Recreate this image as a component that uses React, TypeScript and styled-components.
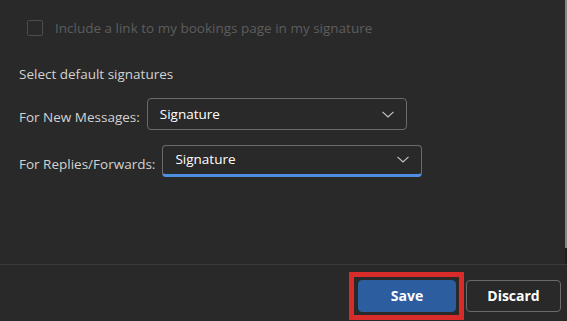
import styled, { createGlobalStyle } from 'styled-components';

const GlobalStyle = createGlobalStyle`
  html, body {
    margin: 0;
    padding: 0;
    background-color: #292929;
  }
  body {
    font-family: "Open Sans", "Noto Sans", sans-serif;
  }
`;

const Panel = styled.div`
  width: 567px;
  height: 321px;
  display: flex;
  flex-direction: column;
  background-color: #292929;
  overflow: hidden;
`;

const Body = styled.div`
  flex: 1;
  display: flex;
  min-height: 0;
`;

const Main = styled.div`
  flex: 1;
  padding: 20px 0 0 19px;
`;

const ScrollTrack = styled.div`
  width: 2px;
  background-color: #1f1f1f;
`;

const ScrollThumb = styled.div`
  height: 248px;
  background-color: #858585;
`;

const CheckRow = styled.label`
  display: flex;
  align-items: center;
  gap: 12px;
  padding-left: 8px;
  height: 16px;
  color: #5d5d5d;
  font-size: 13.5px;
  line-height: 16px;
`;

const CheckBox = styled.span`
  width: 16px;
  height: 16px;
  box-sizing: border-box;
  border: 1px solid #4c4c4c;
  border-radius: 2px;
`;

const SectionTitle = styled.div`
  margin-top: 28px;
  color: #d2d2d2;
  font-size: 13.5px;
  line-height: 20px;
`;

const FieldRow = styled.div<{ $top: number }>`
  display: flex;
  align-items: flex-end;
  gap: 7px;
  margin-top: ${(p) => p.$top}px;
`;

const FieldLabel = styled.span`
  color: #d2d2d2;
  font-size: 13.5px;
  line-height: 20px;
  margin-bottom: 3px;
`;

const Select = styled.div<{ $focused?: boolean }>`
  width: 260px;
  height: 32px;
  box-sizing: border-box;
  display: flex;
  align-items: center;
  justify-content: space-between;
  padding: 0 12px 0 12px;
  border: 1px solid #6b6b6b;
  border-bottom: ${(p) => (p.$focused ? '3px solid #4f8fdf' : '1px solid #6b6b6b')};
  border-radius: 4px;
  color: #ffffff;
  font-size: 13.5px;
  padding-bottom: ${(p) => (p.$focused ? '2px' : '0')};
`;

const Footer = styled.div`
  height: 57px;
  box-sizing: border-box;
  border-top: 1px solid #3b3b3b;
  display: flex;
  align-items: center;
  justify-content: flex-end;
  gap: 2px;
  padding: 7px 6px 2px 0;
`;

const Highlight = styled.span`
  display: flex;
  border: 5px solid #d92b29;
  padding: 3px 3px 3px 4px;
`;

const Button = styled.button<{ $primary?: boolean }>`
  height: 32px;
  box-sizing: border-box;
  border-radius: 4px;
  font-family: "Open Sans", "Noto Sans", sans-serif;
  font-size: 14px;
  font-weight: 700;
  color: #ffffff;
  cursor: pointer;
  width: ${(p) => (p.$primary ? '98px' : '95px')};
  background-color: ${(p) => (p.$primary ? '#2c5d9f' : 'transparent')};
  border: 1px solid ${(p) => (p.$primary ? '#2c5d9f' : '#6b6b6b')};
`;

const Chevron = () => (
  <svg width="12" height="7" viewBox="0 0 12 7" fill="none">
    <path d="M0.5 0.8 L6 6 L11.5 0.8" stroke="#c8c8c8" strokeWidth="1.1" />
  </svg>
);

const App = () => {
  return (
    <>
      <GlobalStyle />
      <Panel>
        <Body>
          <Main>
            <CheckRow>
              <CheckBox />
              Include a link to my bookings page in my signature
            </CheckRow>
            <SectionTitle>Select default signatures</SectionTitle>
            <FieldRow $top={14}>
              <FieldLabel>For New Messages:</FieldLabel>
              <Select>
                Signature
                <Chevron />
              </Select>
            </FieldRow>
            <FieldRow $top={15}>
              <FieldLabel>For Replies/Forwards:</FieldLabel>
              <Select $focused>
                Signature
                <Chevron />
              </Select>
            </FieldRow>
          </Main>
          <ScrollTrack>
            <ScrollThumb />
          </ScrollTrack>
        </Body>
        <Footer>
          <Highlight>
            <Button $primary>Save</Button>
          </Highlight>
          <Button>Discard</Button>
        </Footer>
      </Panel>
    </>
  );
};

export default App;
